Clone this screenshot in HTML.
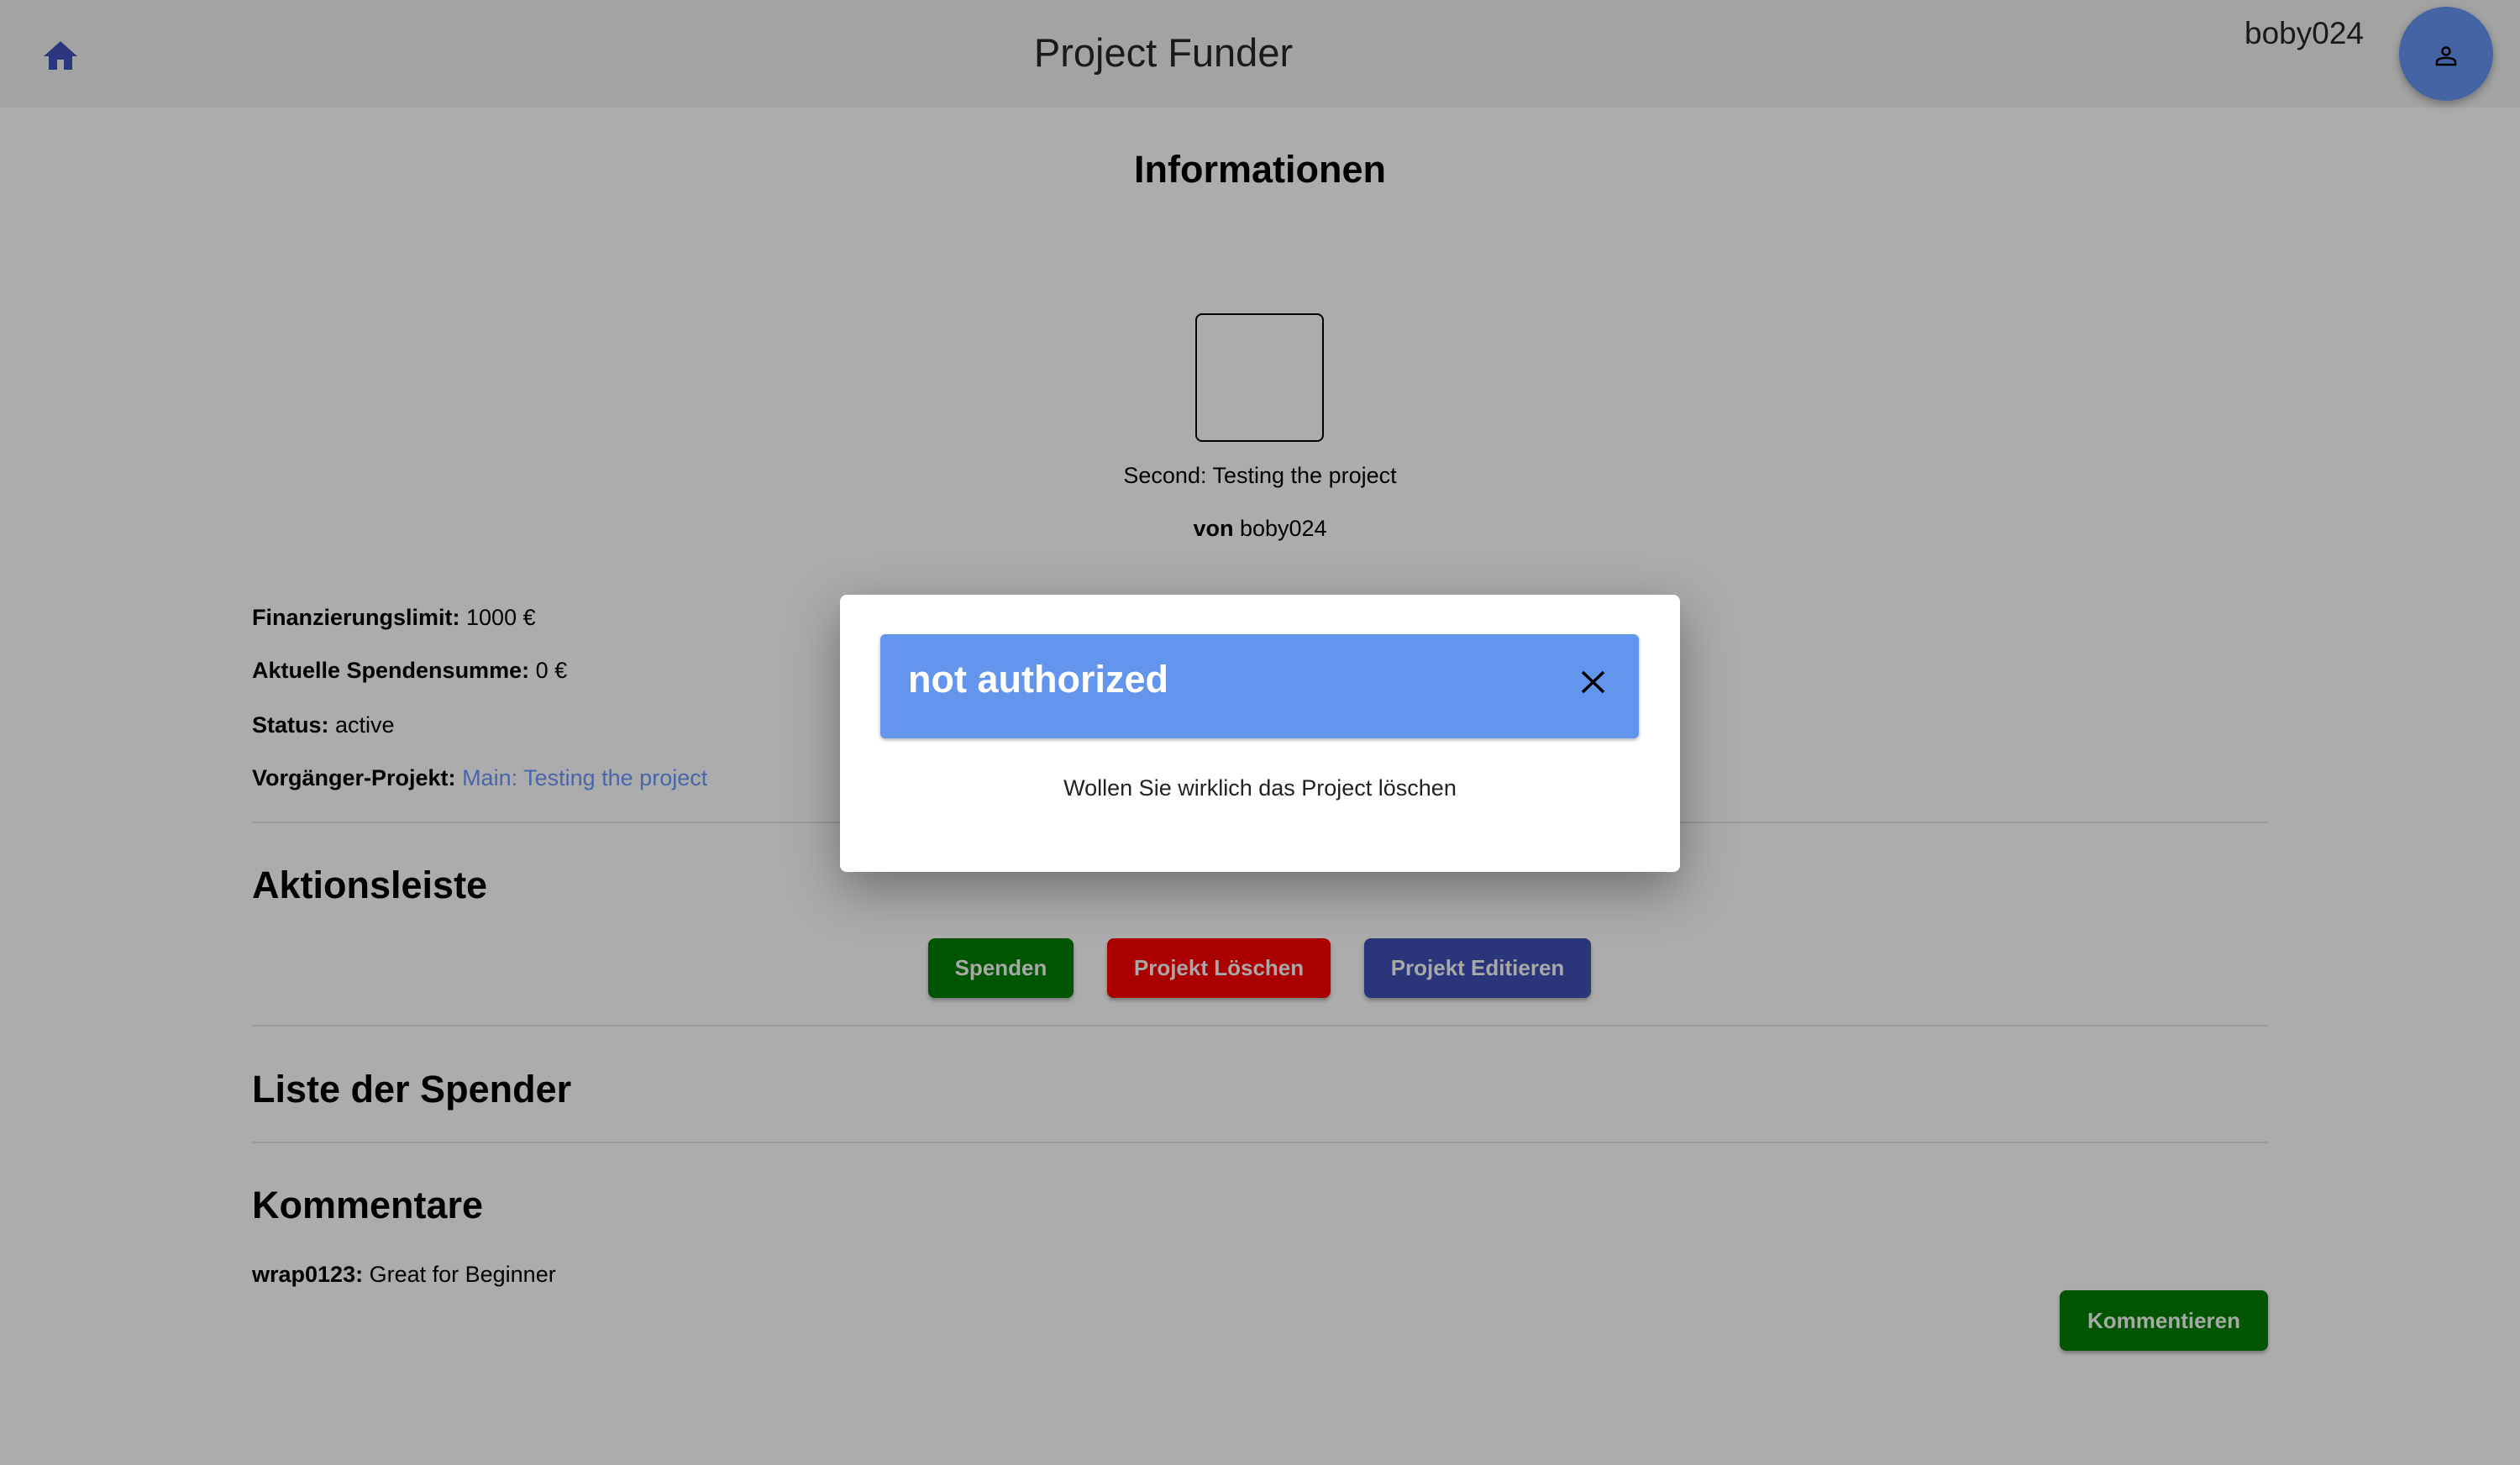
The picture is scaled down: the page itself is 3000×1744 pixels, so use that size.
<!DOCTYPE html>
<html><head><meta charset="utf-8"><style>
*{margin:0;padding:0;box-sizing:border-box}
body{width:3000px;height:1744px;background:#acacac;font-family:"Liberation Sans",sans-serif;color:#000;position:relative;overflow:hidden}
.a{position:absolute;white-space:nowrap}
.hdr{position:absolute;left:0;top:0;width:3000px;height:128px;background:#a3a3a3}
.hr{position:absolute;left:300px;width:2400px;height:2px;background:#999}
.btn{position:absolute;border-radius:8px;color:#a8a8a8;font-weight:bold;font-size:26px;display:flex;align-items:center;justify-content:center;box-shadow:0 3px 4px rgba(0,0,0,.3)}
.h2{font-weight:bold;font-size:45px;line-height:48px}
.t{font-size:27px;line-height:28px}
</style></head><body>
<div class="hdr"></div>
<svg class="a" style="left:52px;top:49px" width="40" height="34" viewBox="0 0 40 34"><path d="M20 0 L40 18 L34 18 L34 34 L24 34 L24 22 L16 22 L16 34 L6 34 L6 18 L0 18 Z" fill="#2b367e"/></svg>
<div class="a" style="left:0;width:2770px;text-align:center;top:38px;font-size:47px;line-height:50px;color:#1a1a1a">Project Funder</div>
<div class="a" style="right:186px;top:20px;font-size:37px;line-height:40px;color:#1a1a1a">boby024</div>
<div class="a" style="left:2856px;top:8px;width:112px;height:112px;border-radius:50%;background:#4464a4;box-shadow:0 4px 10px rgba(0,0,0,.3)"></div>
<svg class="a" style="left:2899px;top:55px" width="26" height="24" viewBox="0 0 26 24"><circle cx="13" cy="6" r="4.5" fill="none" stroke="#000" stroke-width="2.5"/><path d="M2 22 V19 Q2 14 13 14 Q24 14 24 19 V22 Z" fill="none" stroke="#000" stroke-width="2.5"/></svg>

<div class="a h2" style="left:0;width:3000px;text-align:center;top:178px">Informationen</div>
<div class="a" style="left:1423px;top:373px;width:153px;height:153px;border:2px solid #000;border-radius:8px"></div>
<div class="a t" style="left:0;width:3000px;text-align:center;top:552px">Second: Testing the project</div>
<div class="a t" style="left:0;width:3000px;text-align:center;top:615px"><b>von</b> boby024</div>

<div class="a t" style="left:300px;top:721px"><b>Finanzierungslimit:</b> 1000 €</div>
<div class="a t" style="left:300px;top:784px"><b>Aktuelle Spendensumme:</b> 0 €</div>
<div class="a t" style="left:300px;top:849px"><b>Status:</b> active</div>
<div class="a t" style="left:300px;top:912px"><b>Vorgänger-Projekt:</b> <span style="color:#4a66aa">Main: Testing the project</span></div>
<div class="hr" style="top:978px"></div>
<div class="a h2" style="left:300px;top:1030px">Aktionsleiste</div>
<div class="btn" style="left:1105px;top:1117px;width:173px;height:71px;background:#005500">Spenden</div>
<div class="btn" style="left:1318px;top:1117px;width:266px;height:71px;background:#aa0000">Projekt Löschen</div>
<div class="btn" style="left:1624px;top:1117px;width:270px;height:71px;background:#2a357a">Projekt Editieren</div>
<div class="hr" style="top:1220px"></div>
<div class="a h2" style="left:300px;top:1273px">Liste der Spender</div>
<div class="hr" style="top:1359px"></div>
<div class="a h2" style="left:300px;top:1411px">Kommentare</div>
<div class="a t" style="left:300px;top:1503px"><b>wrap0123:</b> Great for Beginner</div>
<div class="btn" style="left:2452px;top:1536px;width:248px;height:72px;background:#005500">Kommentieren</div>

<div class="a" style="left:1000px;top:708px;width:1000px;height:330px;background:#fff;border-radius:8px;box-shadow:0 20px 60px rgba(0,0,0,.35)"></div>
<div class="a" style="left:1048px;top:755px;width:903px;height:124px;background:#6495ed;border-radius:6px;box-shadow:0 2px 4px rgba(0,0,0,.3)"></div>
<div class="a" style="left:1081px;top:784px;font-size:45px;line-height:50px;color:#fff;font-weight:bold">not authorized</div>
<svg class="a" style="left:1882px;top:798px" width="29" height="28" viewBox="0 0 29 28"><path d="M2 2 L27 26 M27 2 L2 26" stroke="#000" stroke-width="3.5"/></svg>
<div class="a t" style="left:1000px;width:1000px;text-align:center;top:924px;color:#222">Wollen Sie wirklich das Project löschen</div>
</body></html>
